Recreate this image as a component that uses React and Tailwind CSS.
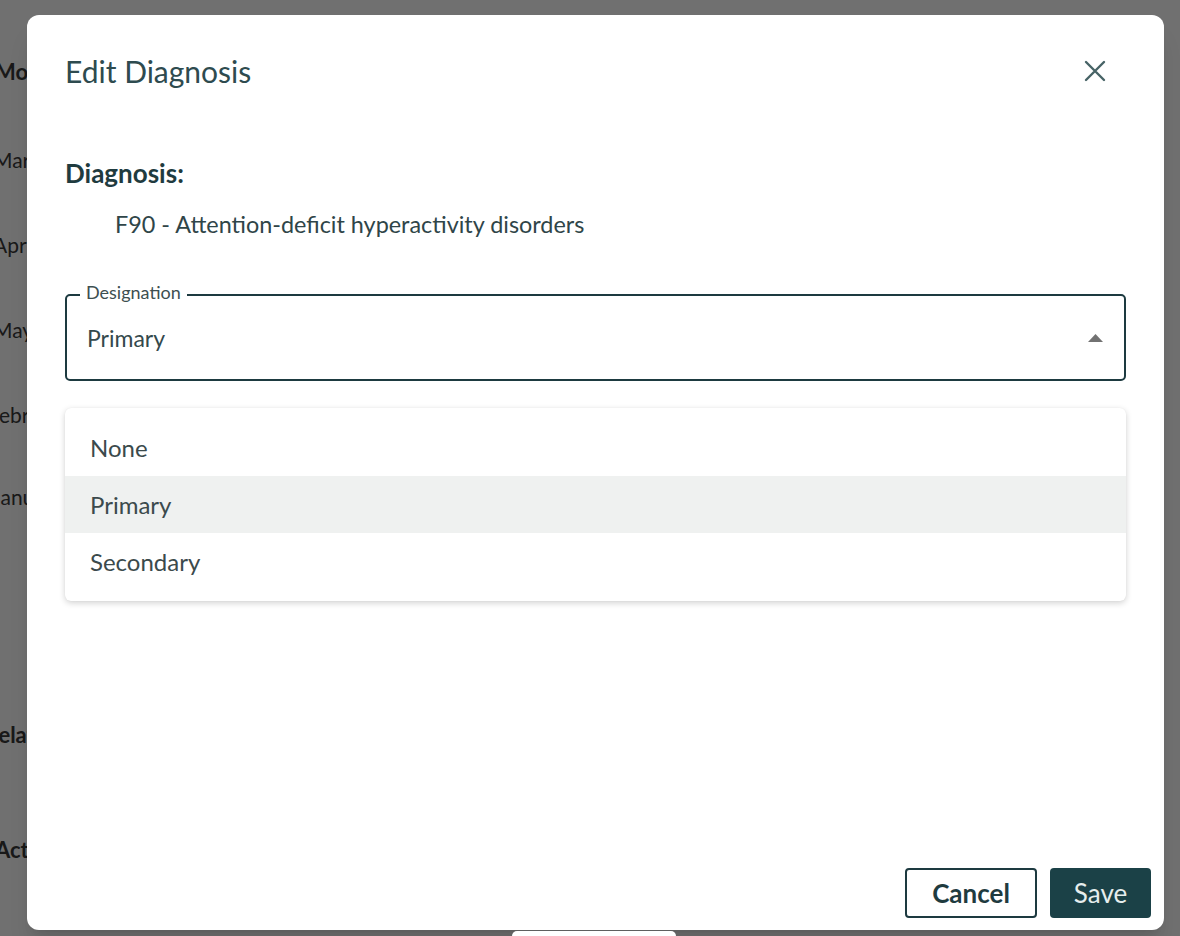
import { useState } from 'react'

const options = ['None', 'Primary', 'Secondary']

// faded page behind the dialog, only a sliver shows on the left
function BackgroundPage() {
    return (
        <div className="flex flex-col text-[#3a3a3a] leading-[24px]">
            <div className="mt-[60px] -ml-[5px] text-[22px] font-bold">Mode</div>
            <div className="mt-[64px] -ml-[7px] text-[21px]">March</div>
            <div className="mt-[61px] -ml-[7px] text-[21px]">April</div>
            <div className="mt-[61px] -ml-[7px] text-[21px]">May</div>
            <div className="mt-[61px] -ml-[12px] text-[21px]">February</div>
            <div className="mt-[58px] -ml-[8px] text-[21px]">January</div>
            <div className="mt-[214px] -ml-[15px] text-[22px] font-bold">Related</div>
            <div className="mt-[91px] -ml-[5px] text-[22px] font-bold">Actions</div>
        </div>
    )
}

export default function App() {
    const [value, setValue] = useState('Primary')

    return (
        <div className="relative h-[936px] w-full overflow-hidden bg-white" style={{ fontFamily: 'Lato, "Noto Sans", sans-serif' }}>
            <BackgroundPage />

            {/* backdrop */}
            <div className="absolute inset-0 bg-black/[0.56] pl-[27px] pt-[15px]">
                <div className="flex h-[915px] w-[1137px] flex-col rounded-[12px] bg-white shadow-xl">
                    {/* header */}
                    <div className="flex items-center justify-between pl-[38px] pr-[58px] pt-[38px]">
                        <h2 className="text-[30px] leading-[36px] text-[#2e4b4f]">Edit Diagnosis</h2>
                        <button className="flex h-[22px] w-[22px] items-center justify-center">
                            <svg width="22" height="22" viewBox="0 0 22 22" fill="none" stroke="#476366" strokeWidth="2.4" strokeLinecap="round">
                                <path d="M2 2 L20 20 M20 2 L2 20" />
                            </svg>
                        </button>
                    </div>

                    {/* body */}
                    <div className="flex flex-col px-[38px]">
                        <div className="mt-[69px] text-[26px] font-bold leading-[30px] text-[#1f3b3f]">Diagnosis:</div>
                        <div className="mt-[22px] pl-[50px] text-[23.4px] leading-[28px] text-[#2f4548]">
                            F90 - Attention-deficit hyperactivity disorders
                        </div>

                        {/* outlined select */}
                        <div className="relative mt-[56px] flex h-[87px] items-center justify-between rounded-[5px] border-2 border-[#1d3a40] pl-[20px] pr-[21px]">
                            <span className="absolute -top-[15px] left-[13px] bg-white px-[6px] text-[18px] leading-[22px] text-[#3d4f51]">
                                Designation
                            </span>
                            <span className="text-[23px] leading-[28px] text-[#34494c]">{value}</span>
                            <svg width="15" height="8" viewBox="0 0 15 8">
                                <path d="M0 8 L7.5 0 L15 8 Z" fill="#727272" />
                            </svg>
                        </div>

                        {/* open menu */}
                        <div className="mt-[27px] rounded-[6px] bg-white py-[11px] shadow-[0_2px_6px_rgba(0,0,0,0.18),0_0_1px_rgba(0,0,0,0.08)]">
                            {options.map(opt => (
                                <button
                                    key={opt}
                                    onClick={() => setValue(opt)}
                                    className={`flex h-[57px] w-full items-center pl-[25px] text-left text-[24px] text-[#3b4a4c] ${opt === value ? 'bg-[#eff1f0]' : ''}`}
                                >
                                    {opt}
                                </button>
                            ))}
                        </div>
                    </div>

                    {/* footer */}
                    <div className="mt-auto flex justify-end gap-[13px] pb-[12px] pr-[13px]">
                        <button className="h-[50px] w-[132px] rounded-[4px] border-2 border-[#1d3a40] text-[26px] font-bold text-[#1f3b3f]">
                            Cancel
                        </button>
                        <button className="h-[50px] w-[101px] rounded-[4px] bg-[#1b4147] text-[26px] text-[#e6eded]">
                            Save
                        </button>
                    </div>
                </div>
            </div>

            <div className="absolute bottom-0 left-[512px] h-[5px] w-[164px] rounded-t-full bg-white" />
        </div>
    )
}
